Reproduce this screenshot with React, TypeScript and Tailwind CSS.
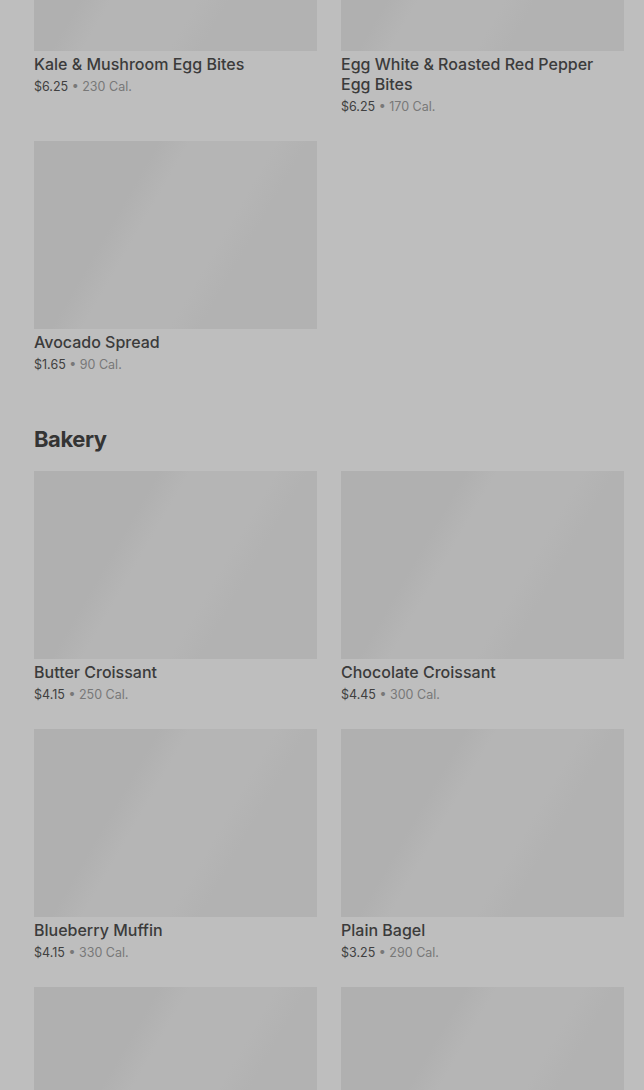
const SECTIONS = [
  {
    title: "",
    items: [
      { name: "Kale & Mushroom Egg Bites", price: "$6.25", cal: "230 Cal." },
      { name: "Egg White & Roasted Red Pepper Egg Bites", price: "$6.25", cal: "170 Cal." },
      { name: "Avocado Spread", price: "$1.65", cal: "90 Cal." },
    ],
  },
  {
    title: "Bakery",
    items: [
      { name: "Butter Croissant", price: "$4.15", cal: "250 Cal." },
      { name: "Chocolate Croissant", price: "$4.45", cal: "300 Cal." },
      { name: "Blueberry Muffin", price: "$4.15", cal: "330 Cal." },
      { name: "Plain Bagel", price: "$3.25", cal: "290 Cal." },
      { name: "Cheese Danish", price: "$3.95", cal: "290 Cal." },
      { name: "Banana Nut Bread", price: "$3.95", cal: "420 Cal." },
    ],
  },
];

function ItemCard({ name, price, cal }: { name: string; price: string; cal: string }) {
  return (
    <div className="flex flex-col">
      {/* placeholder image with shimmer */}
      <div className="h-[188px] w-full bg-[linear-gradient(120deg,#b0b0b0_0%,#b0b0b0_32%,#b5b5b5_40%,#b5b5b5_62%,#b2b2b2_70%,#b2b2b2_100%)]" />
      <p className="mt-[3px] text-[16px] leading-5 font-medium text-[#3b3b3b]">{name}</p>
      <p className="text-[12.5px] leading-[26px] text-[#787878]">
        <span className="text-[#404040]">{price}</span> • {cal}
      </p>
    </div>
  );
}

export default function App() {
  return (
    <div className="h-screen overflow-hidden bg-[#bebebe] pl-[34px] pr-[20px] font-['Inter','Noto_Sans',sans-serif]">
      <div className="-mt-[137px] flex flex-col">
        {SECTIONS.map((section, i) => (
          <section key={i} className={i > 0 ? "mt-[47px]" : ""}>
            {section.title && (
              <h2 className="mb-[18px] text-[22px] leading-7 font-bold tracking-[-0.02em] text-[#343434]">
                {section.title}
              </h2>
            )}
            <div className="grid grid-cols-2 gap-x-6 gap-y-[21px]">
              {section.items.map((item) => (
                <ItemCard key={item.name} {...item} />
              ))}
            </div>
          </section>
        ))}
      </div>
    </div>
  );
}
